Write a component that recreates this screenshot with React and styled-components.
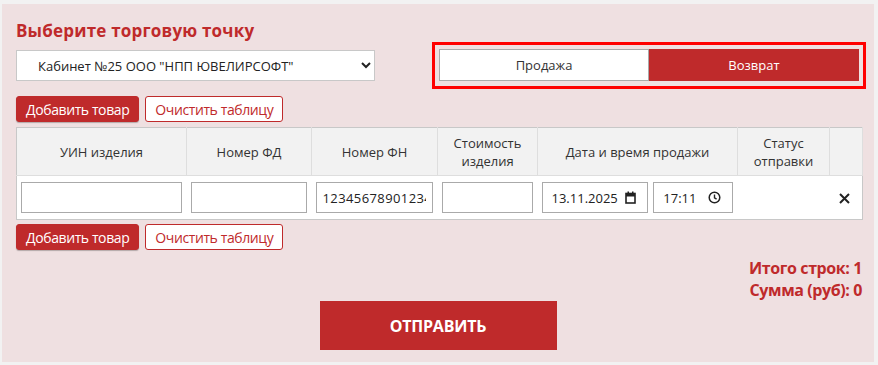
import React from 'react'
import styled, { createGlobalStyle } from 'styled-components'

const Global = createGlobalStyle`
  html, body { margin: 0; padding: 0; background: #f2f2f2; }
  body { font-family: "Open Sans", "Noto Sans", sans-serif; }
  * { box-sizing: border-box; }
`

const RED = '#bf2a2b'

const Page = styled.div`
  padding: 4px 4px 3px 2px;
`

const Panel = styled.div`
  background: #efe0e1;
  height: 358px;
  padding: 17px 8px 0 14px;
  display: flex;
  flex-direction: column;
`

const Title = styled.h2`
  margin: 0;
  color: ${RED};
  font-size: 17px;
  font-weight: 700;
  line-height: 20px;
  letter-spacing: 0.2px;
`

const TopRow = styled.div`
  display: flex;
  justify-content: space-between;
  align-items: flex-start;
`

const Left = styled.div`
  display: flex;
  flex-direction: column;
`

const Select = styled.select`
  margin-top: 9px;
  width: 359px;
  height: 31px;
  padding: 0 8px 0 17px;
  border: 1px solid #c8c8c8;
  background: #fff;
  font-family: "Open Sans", sans-serif;
  font-size: 13px;
  color: #222;
  border-radius: 0;
  outline: none;
`

const Toggle = styled.div`
  margin-top: 21px;
  width: 434px;
  height: 47px;
  border: 3px solid #ff0000;
  padding: 4px 4px 5px 4px;
  display: flex;
`

const ToggleBtn = styled.button`
  flex: 1;
  border: 1px solid ${p => (p.$active ? RED : '#aaa')};
  background: ${p => (p.$active ? RED : '#fff')};
  color: ${p => (p.$active ? '#fff' : '#333')};
  font-family: "Open Sans", sans-serif;
  font-size: 13px;
  padding: 0;
`

const Actions = styled.div`
  display: flex;
  gap: 6px;
  margin-top: ${p => p.$top || 0}px;
`

const ActionBtn = styled.button`
  height: 26px;
  padding: 0 9px;
  border-radius: 3px;
  font-family: "Open Sans", sans-serif;
  font-size: 14px;
  letter-spacing: -0.4px;
  border: 1px solid ${RED};
  background: ${p => (p.$primary ? RED : '#fff')};
  color: ${p => (p.$primary ? '#fff' : RED)};
  box-shadow: ${p => (p.$primary ? '0 1px 1px rgba(0,0,0,0.25)' : 'none')};
`

const Table = styled.table`
  margin-top: 5px;
  width: 846px;
  border-collapse: collapse;
  border: 1px solid #c8c8c8;
  table-layout: fixed;
`

const Th = styled.th`
  background: #f2f2f2;
  height: 48px;
  font-weight: 400;
  font-size: 13px;
  line-height: 18px;
  color: #333;
  text-align: center;
  border-right: 1px solid #dedede;
  border-bottom: 1px solid #dedede;
  padding: 0 4px;
`

const Td = styled.td`
  background: #fff;
  height: 44px;
  padding: 0 5px 0 4px;
  text-align: ${p => p.$align || 'left'};
`

const Input = styled.input`
  width: 100%;
  height: 31px;
  border: 1px solid #aaa;
  background: #fff;
  font-family: "Open Sans", sans-serif;
  font-size: 13px;
  letter-spacing: 0.4px;
  color: #222;
  padding: 0 6px;
  outline: none;
`

const FieldPair = styled.div`
  display: flex;
  gap: 5px;
`

const Fake = styled.div`
  width: ${p => p.$w}px;
  height: 31px;
  border: 1px solid #aaa;
  background: #fff;
  font-size: 13px;
  color: #222;
  display: flex;
  align-items: center;
  justify-content: space-between;
  padding: 0 11px 0 9px;
`

const Remove = styled.span`
  display: inline-flex;
  margin-right: 2px;
`

const Totals = styled.div`
  margin-top: 7px;
  margin-right: 4px;
  display: flex;
  flex-direction: column;
  align-items: flex-end;
  color: ${RED};
  font-weight: 700;
  font-size: 16px;
  line-height: 22px;
  letter-spacing: -0.4px;
`

const Send = styled.button`
  align-self: center;
  margin-top: 0;
  margin-left: -6px;
  width: 237px;
  height: 49px;
  border: none;
  background: ${RED};
  color: #fff;
  font-family: "Open Sans", sans-serif;
  font-weight: 700;
  font-size: 16px;
  letter-spacing: -0.2px;
`

const CalendarIcon = () => (
  <svg width="11" height="13" viewBox="0 0 11 13">
    <rect x="1" y="2.5" width="9" height="9.5" fill="none" stroke="#222" strokeWidth="1.6" />
    <rect x="1" y="2.5" width="9" height="3" fill="#222" />
    <rect x="2.5" y="0.5" width="1.5" height="2.5" fill="#222" />
    <rect x="7" y="0.5" width="1.5" height="2.5" fill="#222" />
  </svg>
)

const ClockIcon = () => (
  <svg width="13" height="13" viewBox="0 0 13 13">
    <circle cx="6.5" cy="6.5" r="5.3" fill="none" stroke="#222" strokeWidth="1.5" />
    <path d="M6.5 3.5 V6.8 L8.6 8.2" fill="none" stroke="#222" strokeWidth="1.4" />
  </svg>
)

const Cross = () => (
  <svg width="11" height="11" viewBox="0 0 11 11">
    <path d="M1 1 L10 10 M10 1 L1 10" stroke="#222" strokeWidth="2" />
  </svg>
)

const cols = [170, 125, 126, 100, 200, 92, 33]

export default function App() {
  return (
    <Page>
      <Global />
      <Panel>
        <TopRow>
          <Left>
            <Title>Выберите торговую точку</Title>
            <Select defaultValue="25">
              <option value="25">Кабинет №25 ООО "НПП ЮВЕЛИРСОФТ"</option>
            </Select>
          </Left>
          <Toggle>
            <ToggleBtn>Продажа</ToggleBtn>
            <ToggleBtn $active>Возврат</ToggleBtn>
          </Toggle>
        </TopRow>

        <Actions $top={7}>
          <ActionBtn $primary>Добавить товар</ActionBtn>
          <ActionBtn>Очистить таблицу</ActionBtn>
        </Actions>

        <Table>
          <colgroup>
            {cols.map((w, i) => (
              <col key={i} style={{ width: w }} />
            ))}
          </colgroup>
          <thead>
            <tr>
              <Th>УИН изделия</Th>
              <Th>Номер ФД</Th>
              <Th>Номер ФН</Th>
              <Th>Стоимость изделия</Th>
              <Th>Дата и время продажи</Th>
              <Th>Статус отправки</Th>
              <Th />
            </tr>
          </thead>
          <tbody>
            <tr>
              <Td><Input defaultValue="" /></Td>
              <Td><Input defaultValue="" /></Td>
              <Td><Input defaultValue="12345678901234" /></Td>
              <Td><Input defaultValue="" /></Td>
              <Td>
                <FieldPair>
                  <Fake $w={108}>13.11.2025<CalendarIcon /></Fake>
                  <Fake $w={80}>17:11<ClockIcon /></Fake>
                </FieldPair>
              </Td>
              <Td />
              <Td $align="center"><Remove><Cross /></Remove></Td>
            </tr>
          </tbody>
        </Table>

        <Actions $top={4}>
          <ActionBtn $primary>Добавить товар</ActionBtn>
          <ActionBtn>Очистить таблицу</ActionBtn>
        </Actions>

        <Totals>
          <span>Итого строк: 1</span>
          <span>Сумма (руб): 0</span>
        </Totals>

        <Send>ОТПРАВИТЬ</Send>
      </Panel>
    </Page>
  )
}
